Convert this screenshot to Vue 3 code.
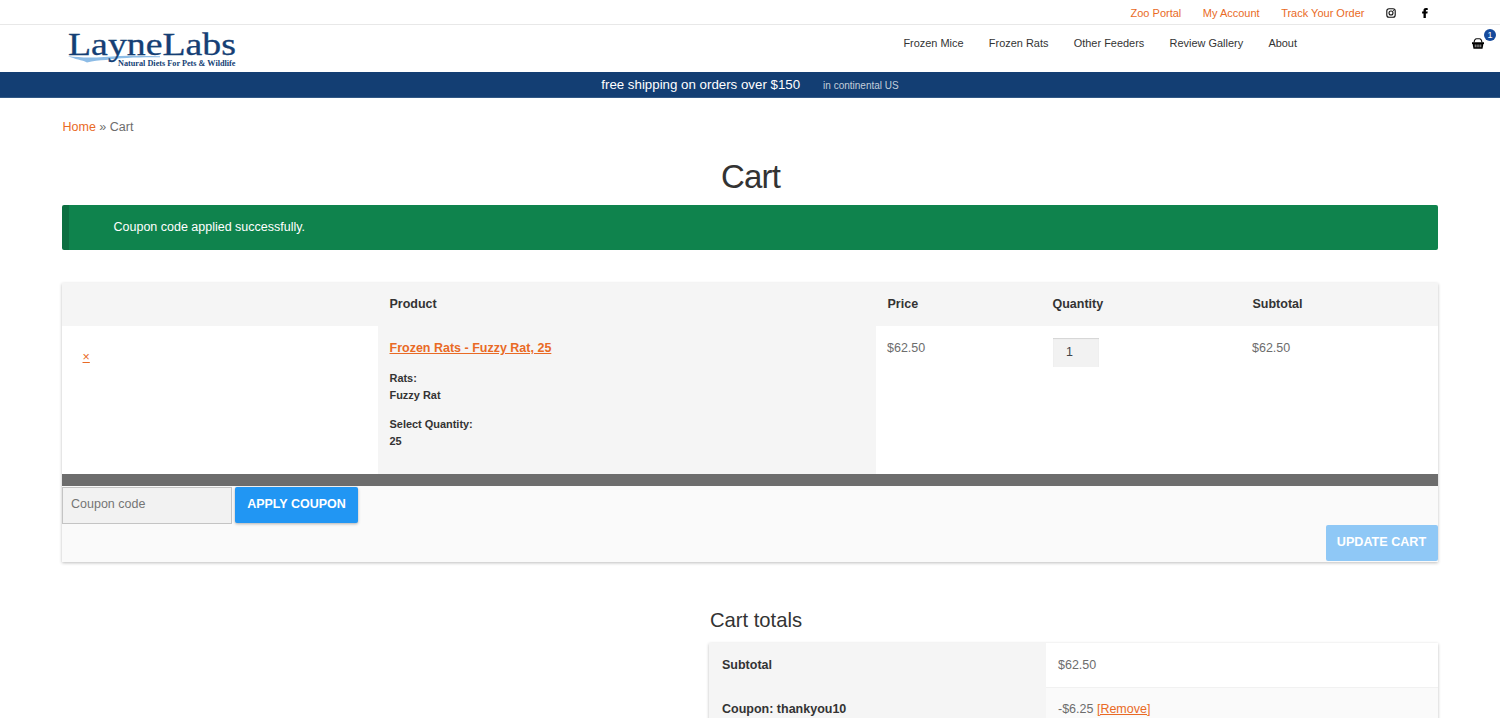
<template>
    <div class="page">
        <div class="top-bar">
            <a v-for="link in topLinks" :key="link" href="#">{{ link }}</a>
            <svg class="social instagram" viewBox="0 0 20 20" fill="none" stroke="#111" stroke-width="2.2">
                <rect x="1.6" y="1.6" width="16.8" height="16.8" rx="4.6" />
                <circle cx="10" cy="10" r="4" />
                <circle cx="14.8" cy="5.2" r="1.1" fill="#111" stroke="none" />
            </svg>
            <svg class="social facebook" viewBox="0 0 12 20">
                <path d="M3 20v-9H.2V6.800H3V5C3 1.700 5 .2 8 .2c1.300 0 2.800.1 3.500.2V4H9.500C8 4 7.700 4.700 7.700 5.600v1.200h3.700L10.800 11H7.700v9z" />
            </svg>
        </div>

        <header class="header">
            <svg class="logo" viewBox="0 0 172 44">
                <path d="M2 28 C12 29.500 24 30 38 29 C56 27.500 74 27.300 94 28.300 V29.300 C74 29 54 29.800 40 32 C33 32 27 33 21 34.500 C16 31.800 9 31.500 2 28z" fill="#8dbce6" />
                <text
                    class="logo-name" x="2" y="26.500" font-size="31"
                    textLength="168" lengthAdjust="spacingAndGlyphs"
                >LayneLabs</text>
                <text
                    x="52" y="38" font-size="9" font-weight="bold"
                    textLength="117.500" lengthAdjust="spacingAndGlyphs"
                >Natural Diets For Pets &amp; Wildlife</text>
            </svg>
            <nav class="menu">
                <a v-for="item in menu" :key="item" href="#">{{ item }}</a>
            </nav>
            <a class="basket" href="#">
                <svg viewBox="0 0 24 22">
                    <path d="M4 9 C5 3 7 1.500 9 1.500h6c2 0 4 1.500 5 7.500" fill="none" stroke="#111" stroke-width="2.200" />
                    <path d="M0 8.500h24v3.500h-1.200L21 21.500H3L1.200 12H0z" />
                    <path d="M6.500 13v5.500M10.200 13v5.500M13.800 13v5.500M17.500 13v5.500" stroke="#fff" stroke-width="1.300" />
                </svg>
                <span class="badge">1</span>
            </a>
        </header>

        <div class="banner">
            <span>free shipping on orders over $150</span>
            <small>in continental US</small>
        </div>

        <main class="content">
            <div class="breadcrumb"><a href="#">Home</a> » Cart</div>
            <h1>Cart</h1>
            <div class="notice">Coupon code applied successfully.</div>

            <div class="cart">
                <table>
                    <colgroup>
                        <col class="col-remove" />
                        <col class="col-product" />
                        <col class="col-price" />
                        <col class="col-quantity" />
                        <col />
                    </colgroup>
                    <thead>
                        <tr>
                            <th></th>
                            <th>Product</th>
                            <th>Price</th>
                            <th>Quantity</th>
                            <th>Subtotal</th>
                        </tr>
                    </thead>
                    <tbody>
                        <tr v-for="item in items" :key="item.name">
                            <td class="remove"><a href="#">×</a></td>
                            <td class="product">
                                <a href="#">{{ item.name }}</a>
                                <dl v-for="option in item.options" :key="option.label">
                                    <dt>{{ option.label }}:</dt>
                                    <dd>{{ option.value }}</dd>
                                </dl>
                            </td>
                            <td>{{ item.price }}</td>
                            <td><input v-model="item.quantity" class="qty" type="text" /></td>
                            <td>{{ item.subtotal }}</td>
                        </tr>
                    </tbody>
                </table>
                <div class="actions">
                    <div class="coupon">
                        <input v-model="coupon" type="text" placeholder="Coupon code" />
                        <button>APPLY COUPON</button>
                    </div>
                    <button class="update" disabled>UPDATE CART</button>
                </div>
            </div>

            <section class="totals">
                <h2>Cart totals</h2>
                <div class="totals-table">
                    <div class="totals-row">
                        <b>Subtotal</b>
                        <span>$62.50</span>
                    </div>
                    <div class="totals-row">
                        <b>Coupon: thankyou10</b>
                        <span>-$6.25 <a href="#">[Remove]</a></span>
                    </div>
                </div>
            </section>
        </main>
    </div>
</template>

<script setup>
import { ref } from "vue";

const topLinks = ["Zoo Portal", "My Account", "Track Your Order"];
const menu = ["Frozen Mice", "Frozen Rats", "Other Feeders", "Review Gallery", "About"];

const coupon = ref("");
const items = ref([
    {
        name: "Frozen Rats - Fuzzy Rat, 25",
        options: [
            { label: "Rats", value: "Fuzzy Rat" },
            { label: "Select Quantity", value: "25" },
        ],
        price: "$62.50",
        quantity: "1",
        subtotal: "$62.50",
    },
]);
</script>

<style>
body {
    overflow: hidden;
}
</style>

<style scoped>
.page {
    height: 718px;
    overflow: hidden;
    background: #fff;
    color: #6d6d6d;
    font-family: "Liberation Sans", Arial, sans-serif;
    font-size: 12.5px;
    line-height: 20px;
}

.page * {
    box-sizing: border-box;
}

a {
    color: #e96a25;
}

.top-bar {
    display: flex;
    align-items: center;
    justify-content: flex-end;
    height: 25px;
    padding: 1px 72px 0 0;
    border-bottom: 1px solid #e8e8e8;
    font-size: 11px;
}

.top-bar a {
    margin-right: 21.5px;
    text-decoration: none;
}

.social {
    height: 10px;
}

.instagram {
    width: 10px;
    margin-right: 26px;
}

.facebook {
    width: 6px;
}

.header {
    display: flex;
    height: 47px;
    padding-left: 66px;
}

.logo {
    width: 172px;
    height: 44px;
    margin-top: 3px;
    overflow: visible;
    fill: #153f75;
    font-family: "Liberation Serif", serif;
}

.logo-name {
    stroke: #153f75;
    stroke-width: 0.3px;
}

.menu {
    display: flex;
    gap: 25.3px;
    margin-left: auto;
    padding-top: 8px;
    font-size: 10.95px;
}

.menu a {
    color: #333;
    text-decoration: none;
}

.basket {
    position: relative;
    width: 28px;
    margin-left: 175px;
}

.basket svg {
    width: 12px;
    height: 11px;
    margin-top: 13px;
}

.badge {
    position: absolute;
    top: 4px;
    right: 4px;
    width: 12px;
    height: 12px;
    border-radius: 50%;
    background: #154a9c;
    color: #fff;
    font-size: 9px;
    line-height: 12px;
    text-align: center;
}

.banner {
    display: flex;
    align-items: center;
    justify-content: center;
    gap: 23px;
    height: 26px;
    background: #133e73;
    border-bottom: 1px solid #315885;
    color: #fff;
    font-size: 13.3px;
}

.banner small {
    padding-top: 2px;
    color: #c3cedb;
    font-size: 10px;
}

.content {
    width: 1376px;
    margin: 0 auto;
    padding-top: 19px;
}

.breadcrumb {
    padding-left: 0.5px;
}

.breadcrumb a {
    text-decoration: none;
}

h1 {
    margin: 20px 0 8px;
    padding-left: 1px;
    color: #333;
    font-size: 33px;
    font-weight: normal;
    letter-spacing: -0.8px;
    line-height: 40px;
    text-align: center;
}

.notice {
    height: 45px;
    padding: 12px 0 0 44.5px;
    border-left: 7px solid #0c6f41;
    border-radius: 2px;
    background: #0f834d;
    color: #fff;
}

.cart {
    margin-top: 33px;
    background: #fafafa;
    box-shadow: 0 1px 3px rgba(0, 0, 0, 0.26);
}

table {
    width: 100%;
    border-spacing: 0;
    table-layout: fixed;
    background: #fff;
}

.col-remove {
    width: 316px;
}

.col-product {
    width: 498px;
}

.col-price {
    width: 165px;
}

.col-quantity {
    width: 200px;
}

th {
    height: 43px;
    padding: 0 11.5px 1px;
    background: #f5f5f5;
    color: #333;
    text-align: left;
}

td {
    height: 148px;
    padding: 12px 11px 0;
    vertical-align: top;
}

.remove {
    padding: 21px 20.5px;
}

.product {
    padding-left: 11.5px;
    background: #f5f5f5;
    color: #333;
    font-weight: bold;
}

dl {
    margin: 12px 0;
    font-size: 10.95px;
    line-height: 17px;
}

dd {
    margin: 0;
}

.qty {
    display: block;
    width: 46px;
    height: 29px;
    margin-left: 1px;
    padding: 0 13px 2px;
    border: 0;
    background: #f2f2f2;
    box-shadow: inset 0 1px 1px rgba(0, 0, 0, 0.125);
    color: #43454b;
    font: inherit;
}

.actions {
    display: flex;
    flex-direction: column;
    height: 88px;
    border-top: 12px solid #6d6d6d;
}

.coupon {
    display: flex;
    gap: 3px;
    height: 39px;
    padding-top: 1px;
}

.coupon input {
    width: 170px;
    height: 37px;
    padding: 0 8px 3px;
    border: 1px solid #c4c4c4;
    background: #f2f2f2;
    font: inherit;
}

.coupon input::placeholder {
    color: #757575;
}

button {
    width: 123px;
    height: 36px;
    padding: 0 0 2px;
    border: 0;
    border-radius: 2px;
    background: #2196f3;
    box-shadow: 0 1px 3px rgba(0, 0, 0, 0.3);
    color: #fff;
    font: inherit;
    font-weight: bold;
}

.update {
    align-self: flex-end;
    width: 112px;
    padding-right: 1px;
    background: #8fc8f6;
    box-shadow: none;
    font-size: 12.6px;
}

.totals {
    width: 729px;
    margin: 43px 0 0 auto;
}

h2 {
    margin: 0 0 8px 1px;
    color: #333;
    font-size: 20.2px;
    font-weight: normal;
    line-height: 30px;
}

.totals-table {
    box-shadow: 0 1px 3px rgba(0, 0, 0, 0.26);
}

.totals-row {
    display: flex;
    height: 44px;
    line-height: 45px;
}

.totals-row b {
    width: 337px;
    padding-left: 13px;
    background: #f5f5f5;
    color: #333;
}

.totals-row span {
    flex: 1;
    padding-left: 12px;
}

.totals-row + .totals-row span {
    background: #fafafa;
    border-top: 1px solid #f1f1f1;
    line-height: 43px;
}
</style>
